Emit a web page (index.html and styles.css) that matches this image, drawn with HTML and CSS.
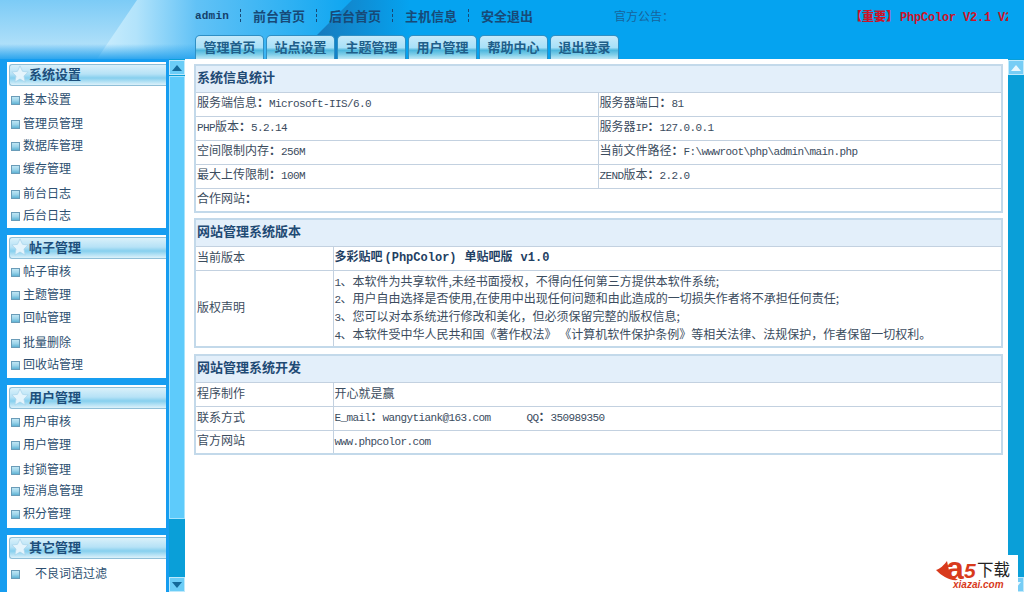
FILE: index.html
```html
<!DOCTYPE html>
<html lang="zh-CN">
<head>
<meta charset="utf-8">
<title>PhpColor</title>
<link rel="stylesheet" href="styles.css">
</head>
<body>
<div class="app">
  <header class="header">
    <svg class="header-art" width="440" height="59" viewBox="0 0 440 59">
      <defs>
        <linearGradient id="lg-base" x1="0" y1="0" x2="0" y2="1">
          <stop offset="0" stop-color="#7ccbf6"/>
          <stop offset="0.75" stop-color="#aedff9"/>
          <stop offset="1" stop-color="#a0d8f8"/>
        </linearGradient>
        <linearGradient id="lg-light" x1="0" y1="0" x2="1" y2="0">
          <stop offset="0" stop-color="#cdeefd"/>
          <stop offset="0.4" stop-color="#b2e3fb"/>
          <stop offset="1" stop-color="#62c2f6"/>
        </linearGradient>
        <linearGradient id="lg-fade" x1="0" y1="0" x2="1" y2="0">
          <stop offset="0" stop-color="#62c2f6"/>
          <stop offset="1" stop-color="#05a3f0"/>
        </linearGradient>
        <linearGradient id="lg-dark" x1="0" y1="0" x2="1" y2="0">
          <stop offset="0" stop-color="#1878ba"/>
          <stop offset="1" stop-color="#05a3f0"/>
        </linearGradient>
        <linearGradient id="lg-bottom" x1="0" y1="0" x2="0" y2="1">
          <stop offset="0" stop-color="#2ea6ee" stop-opacity="0"/>
          <stop offset="1" stop-color="#2ea6ee" stop-opacity="1"/>
        </linearGradient>
      </defs>
      <rect x="0" y="0" width="140" height="59" fill="url(#lg-base)"/>
      <polygon points="137,0 196,0 196,59 97,59" fill="url(#lg-light)"/>
      <rect x="196" y="0" width="170" height="59" fill="url(#lg-fade)"/>
      <polygon points="352,0 410,0 410,59 310,59 316,36" fill="url(#lg-dark)"/>
      <rect x="0" y="44" width="196" height="15" fill="url(#lg-bottom)"/>
    </svg>
    <div class="header-side"></div>
    <div class="header-main">
      <nav class="topnav">
        <span class="user">admin</span>
        <i class="sep"></i><a class="toplink">前台首页</a>
        <i class="sep"></i><a class="toplink">后台首页</a>
        <i class="sep"></i><a class="toplink">主机信息</a>
        <i class="sep"></i><a class="toplink">安全退出</a>
        <span class="notice-label">官方公告：</span>
        <span class="notice"><b>【重要】</b><span class="notice-latin">PhpColor V2.1 V2.2 发布</span></span>
      </nav>
      <div class="tabs">
        <a class="tab">管理首页</a>
        <a class="tab">站点设置</a>
        <a class="tab">主题管理</a>
        <a class="tab">用户管理</a>
        <a class="tab">帮助中心</a>
        <a class="tab">退出登录</a>
      </div>
    </div>
  </header>

  <div class="body">
    <aside class="sidebar">
      <section class="panel panel-a">
        <h3 class="panel-title"><svg class="star" viewBox="0 0 20 20"><polygon points="10,1 12.8,7 19,7.8 14.4,12.2 15.7,19 10,15.6 4.3,19 5.6,12.2 1,7.8 7.2,7"/></svg>系统设置</h3>
        <a class="item g5"><i class="dot"></i>基本设置</a>
        <a class="item g8"><i class="dot"></i>管理员管理</a>
        <a class="item g6"><i class="dot"></i>数据库管理</a>
        <a class="item g7"><i class="dot"></i>缓存管理</a>
        <a class="item g9"><i class="dot"></i>前台日志</a>
        <a class="item g6"><i class="dot"></i>后台日志</a>
      </section>
      <section class="panel panel-b">
        <h3 class="panel-title"><svg class="star" viewBox="0 0 20 20"><polygon points="10,1 12.8,7 19,7.8 14.4,12.2 15.7,19 10,15.6 4.3,19 5.6,12.2 1,7.8 7.2,7"/></svg>帖子管理</h3>
        <a class="item g4"><i class="dot"></i>帖子审核</a>
        <a class="item g7"><i class="dot"></i>主题管理</a>
        <a class="item g7"><i class="dot"></i>回帖管理</a>
        <a class="item g9"><i class="dot"></i>批量删除</a>
        <a class="item g6"><i class="dot"></i>回收站管理</a>
      </section>
      <section class="panel panel-b">
        <h3 class="panel-title"><svg class="star" viewBox="0 0 20 20"><polygon points="10,1 12.8,7 19,7.8 14.4,12.2 15.7,19 10,15.6 4.3,19 5.6,12.2 1,7.8 7.2,7"/></svg>用户管理</h3>
        <a class="item g4"><i class="dot"></i>用户审核</a>
        <a class="item g7"><i class="dot"></i>用户管理</a>
        <a class="item g9"><i class="dot"></i>封锁管理</a>
        <a class="item g5"><i class="dot"></i>短消息管理</a>
        <a class="item g7"><i class="dot"></i>积分管理</a>
      </section>
      <section class="panel panel-c">
        <h3 class="panel-title"><svg class="star" viewBox="0 0 20 20"><polygon points="10,1 12.8,7 19,7.8 14.4,12.2 15.7,19 10,15.6 4.3,19 5.6,12.2 1,7.8 7.2,7"/></svg>其它管理</h3>
        <a class="item item-indent g6"><i class="dot"></i>不良词语过滤</a>
      </section>
    </aside>

    <div class="scrollbar scrollbar-left">
      <div class="sb-btn"><svg width="10" height="6" viewBox="0 0 10 6"><polygon points="5,0 10,6 0,6" class="arrow-dark"/></svg></div>
      <div class="sb-thumb"></div>
      <div class="sb-track"></div>
      <div class="sb-btn"><svg width="10" height="6" viewBox="0 0 10 6"><polygon points="0,0 10,0 5,6" class="arrow-dark"/></svg></div>
    </div>

    <main class="main">
      <table class="info">
        <colgroup><col class="col-half"><col></colgroup>
        <tr class="head"><th colspan="2">系统信息统计</th></tr>
        <tr><td>服务端信息<span class="c">：</span><span class="l">Microsoft-IIS/6.0</span></td><td>服务器端口<span class="c">：</span><span class="l">81</span></td></tr>
        <tr><td><span class="l">PHP</span>版本<span class="c">：</span><span class="l">5.2.14</span></td><td>服务器<span class="l">IP</span><span class="c">：</span><span class="l">127.0.0.1</span></td></tr>
        <tr><td>空间限制内存<span class="c">：</span><span class="l">256M</span></td><td>当前文件路径<span class="c">：</span><span class="l">F:\wwwroot\php\admin\main.php</span></td></tr>
        <tr><td>最大上传限制<span class="c">：</span><span class="l">100M</span></td><td><span class="l">ZEND</span>版本<span class="c">：</span><span class="l">2.2.0</span></td></tr>
        <tr><td colspan="2">合作网站<span class="c">：</span></td></tr>
      </table>

      <table class="info">
        <colgroup><col class="col-label"><col></colgroup>
        <tr class="head"><th colspan="2">网站管理系统版本</th></tr>
        <tr><td>当前版本</td><td class="version">多彩贴吧<span class="lb lb-name">(PhpColor)</span>单贴吧版<span class="lb lb-ver">v1.0</span></td></tr>
        <tr class="tall"><td>版权声明</td><td>
          <p class="line"><span class="l">1</span>、本软件为共享软件,未经书面授权，不得向任何第三方提供本软件系统;</p>
          <p class="line"><span class="l">2</span>、用户自由选择是否使用,在使用中出现任何问题和由此造成的一切损失作者将不承担任何责任;</p>
          <p class="line"><span class="l">3</span>、您可以对本系统进行修改和美化，但必须保留完整的版权信息;</p>
          <p class="line"><span class="l">4</span>、本软件受中华人民共和国《著作权法》 《计算机软件保护条例》等相关法律、法规保护，作者保留一切权利。</p>
        </td></tr>
      </table>

      <table class="info info-last">
        <colgroup><col class="col-label"><col></colgroup>
        <tr class="head"><th colspan="2">网站管理系统开发</th></tr>
        <tr><td>程序制作</td><td>开心就是赢</td></tr>
        <tr><td>联系方式</td><td><span class="l">E_mail</span><span class="c">：</span><span class="l">wangytiank@163.com</span><span class="qq"><span class="l">QQ</span><span class="c">：</span><span class="l">350989350</span></span></td></tr>
        <tr><td>官方网站</td><td><span class="l">www.phpcolor.com</span></td></tr>
      </table>
    </main>

    <div class="scrollbar scrollbar-right">
      <div class="sb-btn sb-btn-light"><svg width="10" height="6" viewBox="0 0 10 6"><polygon points="5,0 10,6 0,6" class="arrow-light"/></svg></div>
      <div class="sb-track"></div>
      <div class="sb-btn sb-btn-light"><svg width="10" height="6" viewBox="0 0 10 6"><polygon points="0,0 10,0 5,6" class="arrow-light"/></svg></div>
    </div>
  </div>

  <div class="watermark">
    <svg width="82" height="37" viewBox="0 0 82 37">
      <path class="wm-red" d="M0,15 C4,14 8,10 11,6 L14,20 L22,25 C13,26 6,21 0,15 Z"/>
      <text class="wm-a" x="10" y="24">a</text>
      <text class="wm-five" x="28" y="23">5</text>
      <text class="wm-cn" x="41" y="21">下载</text>
      <text class="wm-site" x="17" y="33">xiazai.com</text>
    </svg>
  </div>
</div>
</body>
</html>
```

FILE: styles.css
```css
* { box-sizing: border-box; }
html, body { margin: 0; padding: 0; height: 100%; overflow: hidden; }
body {
  font-family: "Noto Sans CJK SC", "Liberation Sans", sans-serif;
  font-size: 12px;
  color: #33475b;
  background: #fff;
}
.app { position: relative; width: 1024px; height: 592px; overflow: hidden; display: flex; flex-direction: column; }

/* header */
.header { position: relative; flex: 0 0 59px; display: flex; background: #05a3f0; overflow: hidden; }
.header-art { position: absolute; left: 0; top: 0; }
.header-side { position: relative; flex: 0 0 195px; }
.header-main { position: relative; flex: 1; display: flex; flex-direction: column; min-width: 0; }
.topnav { display: flex; align-items: center; gap: 12px; height: 35px; padding-bottom: 4px; white-space: nowrap; }
.user {
  flex: none; font-family: "Liberation Mono", monospace; font-weight: bold; font-size: 11px;
  letter-spacing: 0.2px; color: #14406b; width: 33px;
}
.sep { flex: none; width: 0; height: 13px; border-left: 1px dashed #174a78; }
.toplink { flex: none; font-size: 13px; font-weight: bold; color: #174a78; line-height: 16px; width: 51px; white-space: nowrap; }
.notice-label { flex: none; margin-left: 70px; font-size: 12px; color: #17639c; width: 60px; }
.notice { flex: none; margin-left: 164px; width: 158px; overflow: hidden; color: #cc1428; font-weight: bold; font-size: 12px; }
.notice-latin { font-family: "Liberation Mono", monospace; letter-spacing: -0.2px; margin-left: 2px; }
.tabs { display: flex; gap: 2px; height: 24px; }
.tab {
  flex: 0 0 69px; height: 24px; text-align: center; line-height: 21px;
  font-size: 13px; font-weight: bold; color: #1f5f8a;
  border: 1px solid #2f8fc4; border-bottom: 0; border-radius: 5px 5px 0 0;
  background: linear-gradient(#c6eafa 0, #a8e0f8 50%, #4db7de 62%, #7ccde8 80%, #c0e8f6 100%);
}

/* layout */
.body { flex: 1; display: flex; min-height: 0; }
.sidebar {
  flex: 0 0 169px; background: #169df0; padding: 3px 3px 0 7px;
  display: flex; flex-direction: column; gap: 7px; overflow: hidden;
}
.panel { flex: none; background: #fff; padding: 2px 0 0 2px; overflow: hidden; }
.panel-a { height: 166px; }
.panel-b { height: 143px; }
.panel-c { height: 60px; }
.panel-title {
  margin: 0; height: 22px; display: flex; align-items: center; padding-bottom: 2px;
  font-size: 13px; font-weight: bold; color: #1d4f7c; line-height: 18px;
  border: 1px solid #8fbfd8; border-right: 0; border-radius: 3px 0 0 3px;
  background: linear-gradient(#d9f0fa 0, #b6e2f6 45%, #86cfee 65%, #b0e0f4 82%, #dcf1fa 100%);
}
.star { width: 18px; height: 18px; margin-left: 1px; flex: none; fill: #e4f4fc; stroke: #a8d4ea; stroke-width: 0.8; }
.item { display: flex; align-items: center; height: 16px; padding: 0 0 0 2px; font-size: 12px; line-height: 14px; color: #2d4f70; white-space: nowrap; }
.dot {
  width: 9px; height: 9px; margin-right: 3px; flex: none; margin-top: 3px;
  border: 1px solid #6a9cb8;
  background: linear-gradient(#bfe6f4 0, #9cd4ea 50%, #5fb3d4 100%);
}
.item-indent .dot { margin-right: 15px; }
.g4 { margin-top: 4px; }
.g5 { margin-top: 5px; }
.g6 { margin-top: 6px; }
.g7 { margin-top: 7px; }
.g8 { margin-top: 8px; }
.g9 { margin-top: 9px; }

/* scrollbars */
.scrollbar { flex: 0 0 16px; display: flex; flex-direction: column; background: #0a9fd8; padding-top: 1px; }
.sb-btn {
  flex: 0 0 15px; display: flex; align-items: center; justify-content: center;
  background: #6bcdf7; border: 1px solid #bfe9fb;
}
.sb-btn-light { background: #77cdf5; }
.sb-thumb { flex: 0 0 443px; margin-top: 1px; background: #5ecbfb; border: 1px solid #a5e3fc; }
.sb-track { flex: 1; }
.arrow-dark { fill: #146a9a; }
.arrow-light { fill: #e9f8fe; }

/* main */
.main { flex: 1; min-width: 0; background: #fff; padding: 5px 5px 0 9px; }
.info {
  width: 809px; border-collapse: collapse; table-layout: fixed; margin-bottom: 5px;
  border: 2px solid #c3d9ea;
}
.info-last { margin-top: 6px; }
.info th, .info td {
  border: 1px solid #c3d1e0; padding: 0 1px 3px; height: 24px;
  font-size: 12px; line-height: 14px; font-weight: normal; text-align: left; color: #3b4c5e;
}
.info tr.head th {
  height: 27px; padding-bottom: 3px; background: #e3effa; font-size: 13px; font-weight: bold; color: #1f4a74;
}
.col-half { width: 403px; }
.col-label { width: 138px; }
.tall td { height: 77px; padding-bottom: 2px; }
.line { margin: 0; line-height: 17.8px; white-space: nowrap; }
.l { font-family: "Liberation Mono", monospace; font-size: 11px; line-height: 1; letter-spacing: -0.6px; }
.c { font-family: "Noto Sans CJK TC", sans-serif; font-weight: bold; line-height: 1; }
.lb { font-family: "Liberation Mono", monospace; font-size: 12px; line-height: 1; font-weight: bold; }
.lb-name { margin: 0 8px 0 2px; }
.lb-ver { margin-left: 8px; }
.info td.version { font-weight: bold; color: #1f3f63; }
.qq { margin-left: 36px; }

/* watermark */
.watermark { position: absolute; right: 6px; bottom: 0; width: 82px; height: 37px; background: #fff; }
.wm-red { fill: #d83a1c; }
.wm-a { font-family: "Liberation Sans", sans-serif; font-weight: bold; font-size: 32px; fill: #d83a1c; }
.wm-five { font-family: "Liberation Sans", sans-serif; font-weight: bold; font-style: italic; font-size: 21px; fill: #d83a1c; }
.wm-cn { font-family: "Noto Sans CJK SC", sans-serif; font-size: 16.5px; fill: #222; }
.wm-site { font-family: "Liberation Sans", sans-serif; font-weight: bold; font-style: italic; font-size: 10px; fill: #d83a1c; }
```
